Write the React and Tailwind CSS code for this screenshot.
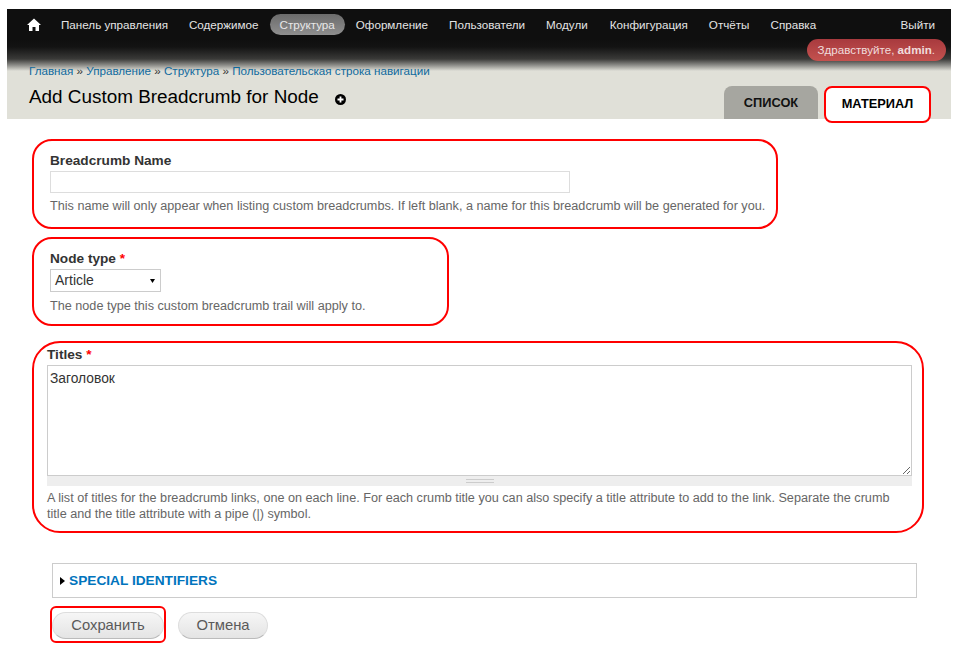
import React from 'react';

const LINK = 'text-[#0f6a9e]';
const BTN = 'h-[27px] rounded-[14px] border border-[#ddd] border-b-[#bbb] bg-[linear-gradient(to_bottom,#f6f6f6,#e4e4e4)] text-[14.8px] text-[#5a5a5a]';

function HomeIcon() {
  return (
    <svg width="14" height="13" viewBox="0 0 14 13" className="block">
      <path d="M7 0.5 L14 7 L12 7 L12 13 L8.5 13 L8.5 9 L5.5 9 L5.5 13 L2 13 L2 7 L0 7 Z" fill="#fff" />
    </svg>
  );
}

function Header() {
  return (
    <header className="mx-[7px] mt-[9px] h-[110px] bg-[#e0e0d8] relative flex flex-col">
      <div className="shrink-0 h-[62px] bg-[linear-gradient(to_bottom,#0f0f0f_0px,#0f0f0f_30px,#131313_38px,#3a3a38_50px,#8a8a86_56px,#e0e0d8_62px)] -mb-[8px]">
        <nav className="flex items-center h-[31px] pl-[20px] pr-[16px] text-[11.65px] text-[#e4e4e4]">
          <HomeIcon />
          <a className="ml-[20px]">Панель управления</a>
          <a className="ml-[21px]">Содержимое</a>
          <a className="ml-[11px] px-[10px] h-[21px] leading-[21px] rounded-[11px] bg-[linear-gradient(to_bottom,#6b6b6b,#8f8f8f)] text-[#e8e8e8]">Структура</a>
          <a className="ml-[11px]">Оформление</a>
          <a className="ml-[21px]">Пользователи</a>
          <a className="ml-[21px]">Модули</a>
          <a className="ml-[22px]">Конфигурация</a>
          <a className="ml-[21px]">Отчёты</a>
          <a className="ml-[21px]">Справка</a>
          <a className="ml-auto">Выйти</a>
        </nav>
        <div className="flex justify-end pr-[5px] -mt-[1px]">
          <div className="h-[22px] px-[11px] rounded-[11px] bg-[linear-gradient(to_bottom,#a83a3e,#c4524f)] text-[11.6px] leading-[21px] text-[#f0dcdc]">
            Здравствуйте, <b>admin</b>.
          </div>
        </div>
      </div>
      <div className="shrink-0 relative pl-[22px] text-[11.65px] leading-[16px] text-[#333]">
        <a className={LINK}>Главная</a> » <a className={LINK}>Управление</a> » <a className={LINK}>Структура</a> » <a className={LINK}>Пользовательская строка навигации</a>
      </div>
      <div className="flex relative pl-[22px]">
        <h1 className="mt-[6px] text-[18.9px] leading-[24px] text-[#000]">Add Custom Breadcrumb for Node</h1>
        <svg width="11" height="11" viewBox="0 0 11 11" className="ml-[16px] mt-[15px]">
          <circle cx="5.5" cy="5.5" r="5.5" fill="#000" />
          <path d="M5.5 2.5 V8.5 M2.5 5.5 H8.5" stroke="#fff" strokeWidth="1.8" />
        </svg>
        <div className="ml-auto mr-[20px] mt-[7px] flex items-start gap-[6px]">
          <div className="w-[94px] h-[33px] rounded-t-[8px] bg-[#a6a6a0] text-center text-[12.8px] leading-[33px] font-bold text-[#111]">СПИСОК</div>
          <div className="w-[107px] h-[37px] rounded-[8px] border-2 border-[#f00] bg-white text-center text-[12.8px] leading-[31px] font-bold text-[#000]">МАТЕРИАЛ</div>
        </div>
      </div>
    </header>
  );
}

export default function App() {
  return (
    <div className="min-h-[661px] bg-white font-['Liberation_Sans',Arial,sans-serif] overflow-hidden">
      <Header />
      <main className="pl-[32px] text-[12.65px] text-[#666]">
        <section className="mt-[20px] w-[746px] h-[90px] rounded-[20px] border-2 border-[#f00] pl-[16px] pt-[11px]">
          <label className="block text-[13.65px] leading-[18px] font-bold text-[#333]">Breadcrumb Name</label>
          <input className="block mt-[1px] w-[520px] h-[22px] border border-[#ddd] bg-white" />
          <p className="mt-[5px] leading-[16px] whitespace-nowrap">This name will only appear when listing custom breadcrumbs. If left blank, a name for this breadcrumb will be generated for you.</p>
        </section>

        <section className="mt-[8px] w-[417px] h-[89px] rounded-[20px] border-2 border-[#f00] pl-[16px] pt-[11px]">
          <label className="block text-[13.65px] leading-[18px] font-bold text-[#333]">Node type <span className="text-[#f00]">*</span></label>
          <div className="mt-[1px] w-[111px] h-[23px] border border-[#ccc] flex items-center pl-[4px] pr-[5px] text-[14px] text-[#333]">
            Article
            <svg width="5" height="4" viewBox="0 0 5 4" className="ml-auto"><path d="M0 0 H5 L2.5 4 Z" fill="#000" /></svg>
          </div>
          <p className="mt-[6px] leading-[16px]">The node type this custom breadcrumb trail will apply to.</p>
        </section>

        <section className="mt-[15px] w-[892px] h-[192px] rounded-[28px] border-2 border-[#f00] pl-[13px] pt-[3px]">
          <label className="block text-[13.65px] leading-[18px] font-bold text-[#333]">Titles <span className="text-[#f00]">*</span></label>
          <div className="mt-[1px] w-[865px]">
            <textarea defaultValue="Заголовок" className="block w-full h-[111px] border border-[#ccc] px-[2px] pt-[3px] text-[13.8px] leading-[20px] text-[#333]" />
            <div className="h-[10px] bg-[#eee] flex justify-center items-center">
              <div className="w-[28px] h-[4px] border-y border-[#ccc]" />
            </div>
          </div>
          <p className="mt-[4px] w-[860px] leading-[16px]">A list of titles for the breadcrumb links, one on each line. For each crumb title you can also specify a title attribute to add to the link. Separate the crumb title and the title attribute with a pipe (|) symbol.</p>
        </section>

        <section className="mt-[30px] ml-[20px] w-[865px] h-[35px] border border-[#ccc] flex items-center pl-[7px]">
          <svg width="5" height="8" viewBox="0 0 5 8"><path d="M0 0 L5 4 L0 8 Z" fill="#000" /></svg>
          <span className="ml-[4px] pt-[1px] text-[13.7px] font-bold text-[#0074bd]">SPECIAL IDENTIFIERS</span>
        </section>

        <div className="mt-[8px] ml-[18px] flex items-start">
          <div className="w-[116px] h-[37px] rounded-[6px] border-2 border-[#f00] pt-[4px]">
            <button className={`block w-[112px] ${BTN}`}>Сохранить</button>
          </div>
          <button className={`ml-[12px] mt-[6px] w-[90px] ${BTN}`}>Отмена</button>
        </div>
      </main>
    </div>
  );
}
